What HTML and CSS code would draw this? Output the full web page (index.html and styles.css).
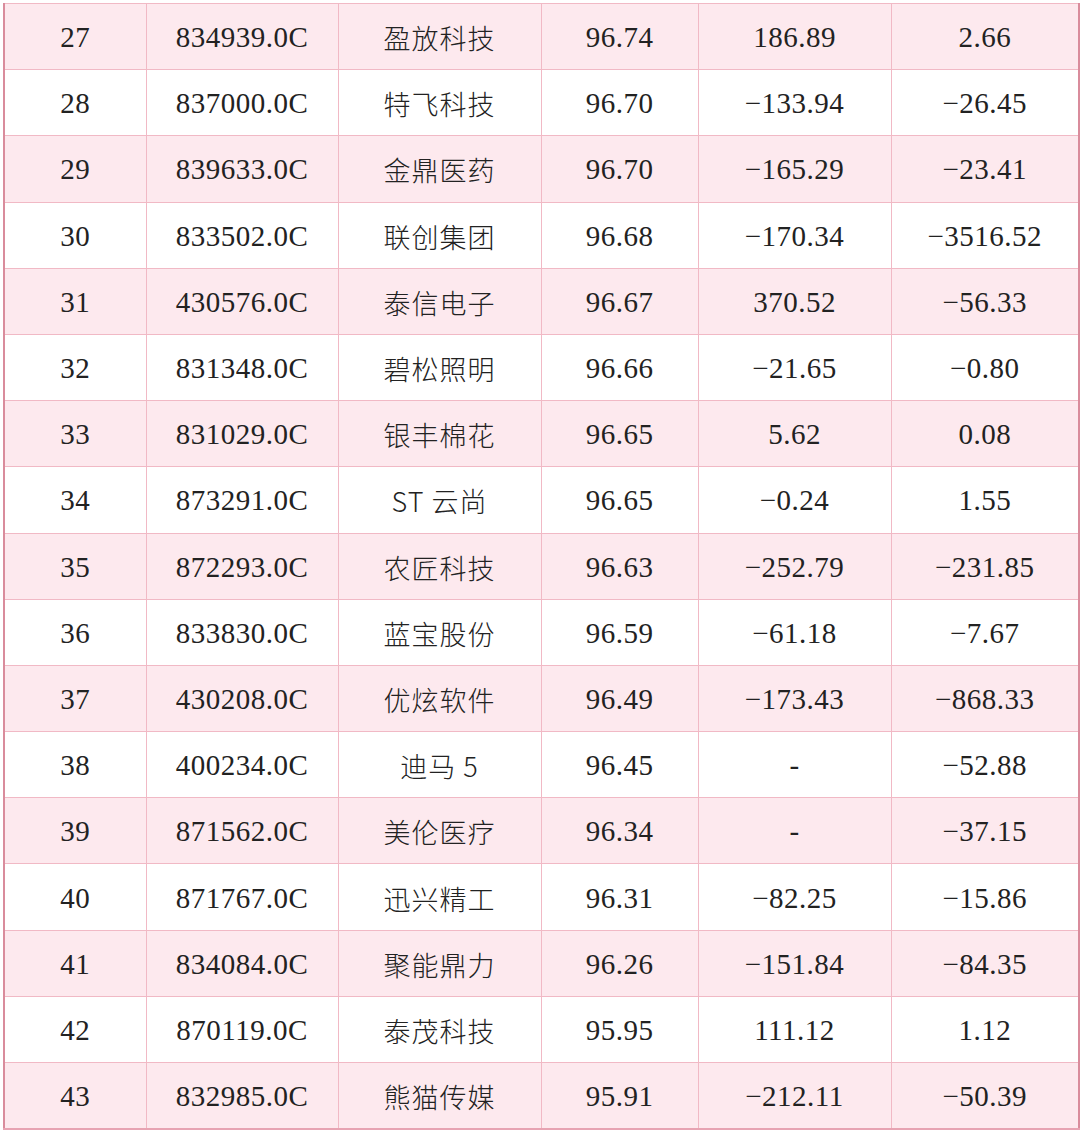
FILE: index.html
```html
<!DOCTYPE html>
<html lang="zh">
<head>
<meta charset="utf-8">
<link rel="stylesheet" href="styles.css">
</head>
<body>
<table class="rank">
<colgroup>
<col class="c1"><col class="c2"><col class="c3"><col class="c4"><col class="c5"><col class="c6">
</colgroup>
<tbody>
<tr class="alt"><td>27</td><td>834939.0C</td><td class="cn">盈放科技</td><td>96.74</td><td>186.89</td><td>2.66</td></tr>
<tr><td>28</td><td>837000.0C</td><td class="cn">特飞科技</td><td>96.70</td><td>−133.94</td><td>−26.45</td></tr>
<tr class="alt"><td>29</td><td>839633.0C</td><td class="cn">金鼎医药</td><td>96.70</td><td>−165.29</td><td>−23.41</td></tr>
<tr><td>30</td><td>833502.0C</td><td class="cn">联创集团</td><td>96.68</td><td>−170.34</td><td>−3516.52</td></tr>
<tr class="alt"><td>31</td><td>430576.0C</td><td class="cn">泰信电子</td><td>96.67</td><td>370.52</td><td>−56.33</td></tr>
<tr><td>32</td><td>831348.0C</td><td class="cn">碧松照明</td><td>96.66</td><td>−21.65</td><td>−0.80</td></tr>
<tr class="alt"><td>33</td><td>831029.0C</td><td class="cn">银丰棉花</td><td>96.65</td><td>5.62</td><td>0.08</td></tr>
<tr><td>34</td><td>873291.0C</td><td class="cn">ST 云尚</td><td>96.65</td><td>−0.24</td><td>1.55</td></tr>
<tr class="alt"><td>35</td><td>872293.0C</td><td class="cn">农匠科技</td><td>96.63</td><td>−252.79</td><td>−231.85</td></tr>
<tr><td>36</td><td>833830.0C</td><td class="cn">蓝宝股份</td><td>96.59</td><td>−61.18</td><td>−7.67</td></tr>
<tr class="alt"><td>37</td><td>430208.0C</td><td class="cn">优炫软件</td><td>96.49</td><td>−173.43</td><td>−868.33</td></tr>
<tr><td>38</td><td>400234.0C</td><td class="cn">迪马 5</td><td>96.45</td><td>-</td><td>−52.88</td></tr>
<tr class="alt"><td>39</td><td>871562.0C</td><td class="cn">美伦医疗</td><td>96.34</td><td>-</td><td>−37.15</td></tr>
<tr><td>40</td><td>871767.0C</td><td class="cn">迅兴精工</td><td>96.31</td><td>−82.25</td><td>−15.86</td></tr>
<tr class="alt"><td>41</td><td>834084.0C</td><td class="cn">聚能鼎力</td><td>96.26</td><td>−151.84</td><td>−84.35</td></tr>
<tr><td>42</td><td>870119.0C</td><td class="cn">泰茂科技</td><td>95.95</td><td>111.12</td><td>1.12</td></tr>
<tr class="alt"><td>43</td><td>832985.0C</td><td class="cn">熊猫传媒</td><td>95.91</td><td>−212.11</td><td>−50.39</td></tr>
</tbody>
</table>
</body>
</html>
```

FILE: styles.css
```css
html, body {
  margin: 0;
  padding: 0;
  background: #ffffff;
}
body {
  padding: 3px 0 0 3px;
}
.rank {
  border-collapse: collapse;
  table-layout: fixed;
  width: 1075px;
  font-family: "Liberation Serif", "Noto Sans CJK SC", serif;
  font-size: 29px;
  color: #222222;
  border-left: 2px solid #d98c9c;
  border-right: 2px solid #d98c9c;
  border-top: 1px solid #f0b6c3;
  border-bottom: 2px solid #e7a3b2;
}
.c1 { width: 142px; }
.c2 { width: 192px; }
.c3 { width: 203px; }
.c4 { width: 157px; }
.c5 { width: 193px; }
.c6 { width: 188px; }
.rank td {
  height: 63.2px;
  padding: 2px 0 0 0;
  text-align: center;
  vertical-align: middle;
  border: 1px solid #f1b9c5;
  line-height: 1;
  white-space: nowrap;
  letter-spacing: 0.5px;
}
.rank tr.alt td {
  background: #fde9ee;
}
.rank td.cn {
  font-family: "Noto Sans CJK SC", sans-serif;
  font-size: 27px;
  font-weight: 300;
  letter-spacing: 1px;
}
```
